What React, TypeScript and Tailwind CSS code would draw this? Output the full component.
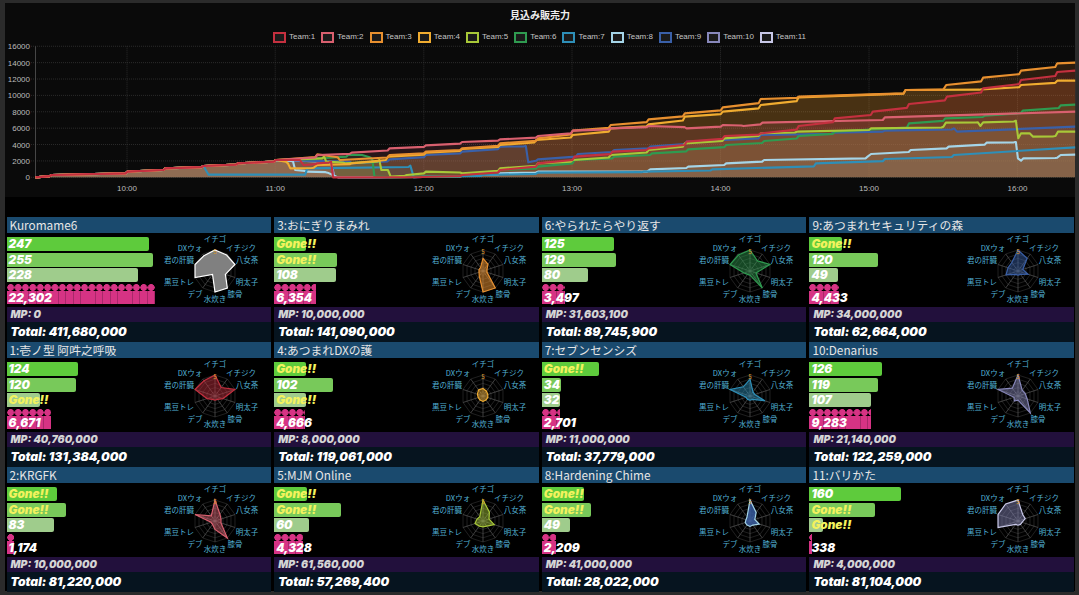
import React from "react";

type Pt = [number, number];

// chart traces: x,y are read off a 2.9x / 3x enlargement, mapped to px in toPath
const base: Pt[] = [[103, 532], [150, 525], [370, 515], [480, 505], [590, 498], [690, 490], [800, 480]];
const R = 1566;

const series: { color: string; pts: Pt[] }[] = [
  { color: "#c4303f", pts: [...base, [870, 480], [880, 495], [920, 490], [960, 485], [966, 532], [1225, 531], [1340, 525], [1450, 510], [1560, 490], [R + 100, 470], [R + 210, 455], [R + 315, 445], [R + 425, 425], [R + 535, 408], [R + 640, 400], [R + 750, 378], [R + 855, 355], [R + 965, 335], [R + 1070, 312], [R + 1180, 290], [R + 1285, 265], [R + 1395, 240], [R + 1500, 216], [R + 1552, 212]] },
  { color: "#d9606f", pts: [...base, [920, 465], [1020, 458], [1130, 445], [1235, 436], [1340, 426], [1450, 418], [R - 6, 408], [R + 95, 392], [R + 205, 385], [R + 315, 378], [R + 425, 385], [R + 530, 375], [R + 590, 378], [R + 645, 368], [R + 1000, 352], [R + 1552, 335]] },
  { color: "#e8902f", pts: [...base, [920, 463], [985, 480], [1130, 465], [1235, 455], [1340, 445], [1450, 430], [1560, 415], [R + 95, 392], [R + 205, 375], [R + 315, 358], [R + 420, 340], [R + 530, 322], [R + 640, 297], [R + 750, 290], [R + 1060, 270], [R + 1170, 268], [R + 1178, 255], [R + 1285, 233], [R + 1395, 212], [R + 1500, 190], [R + 1552, 188]] },
  { color: "#f0ac30", pts: [...base, [835, 490], [842, 505], [910, 503], [920, 495], [1020, 490], [1125, 470], [1235, 458], [1340, 447], [1450, 435], [1555, 420], [R + 95, 405], [R + 205, 385], [R + 315, 373], [R + 420, 350], [R + 530, 335], [R + 640, 315], [R + 750, 292], [R + 1060, 270], [R + 1280, 268], [R + 1395, 255], [R + 1500, 242], [R + 1552, 242]] },
  { color: "#a8c838", pts: [...base, [940, 470], [946, 485], [1000, 490], [1100, 480], [1106, 510], [1125, 510], [1133, 530], [1180, 525], [1235, 515], [1340, 520], [1450, 505], [1560, 490], [R + 95, 480], [R + 205, 465], [R + 315, 450], [R + 420, 430], [R + 535, 415], [R + 640, 400], [R + 745, 395], [R + 960, 385], [R + 1170, 380], [R + 1177, 368], [R + 1270, 367], [R + 1277, 378], [R + 1285, 367], [R + 1380, 362], [R + 1387, 415], [R + 1395, 400], [R + 1420, 400], [R + 1430, 410], [R + 1495, 408], [R + 1502, 395], [R + 1552, 395]] },
  { color: "#2f9a50", pts: [...base, [920, 475], [1010, 465], [1050, 465], [1080, 480], [1086, 530], [1130, 532], [1340, 525], [1450, 510], [1560, 500], [R + 100, 480], [R + 215, 470], [R + 325, 460], [R + 430, 448], [R + 540, 435], [R + 650, 423], [R + 750, 408], [R + 855, 395], [R + 1070, 370], [R + 1175, 355], [R + 1290, 347], [R + 1400, 332], [R + 1510, 316], [R + 1552, 314]] },
  { color: "#2e8fb8", pts: [...base.slice(0, 5), [605, 524], [885, 524], [891, 505], [1190, 497], [1200, 532], [1225, 530], [1400, 525], [1560, 518], [R + 300, 515], [R + 500, 508], [R + 800, 490], [R + 1000, 477], [R + 1200, 465], [R + 1552, 442]] },
  { color: "#a5d5e8", pts: [...base, [850, 485], [856, 510], [890, 515], [950, 518], [965, 525], [980, 532], [1100, 532], [1340, 527], [1450, 520], [1560, 515], [R + 310, 515], [R + 320, 508], [R + 430, 500], [R + 540, 490], [R + 650, 480], [R + 950, 470], [R + 960, 462], [R + 1075, 450], [R + 1185, 440], [R + 1295, 428], [R + 1380, 426], [R + 1386, 475], [R + 1395, 482], [R + 1402, 475], [R + 1500, 473], [R + 1510, 465], [R + 1552, 464]] },
  { color: "#3a60a8", pts: [...base, [1020, 490], [1130, 478], [1235, 465], [1340, 455], [1450, 440], [1525, 438], [1532, 487], [R - 6, 478], [R + 110, 462], [R + 215, 450], [R + 320, 440], [R + 425, 425], [R + 640, 405], [R + 850, 398], [R + 1000, 392], [R + 1200, 385], [R + 1210, 395], [R + 1552, 380]] },
  { color: "#8888bb", pts: [...base, [960, 490], [970, 532]] },
  { color: "#c8c8e8", pts: [...base, [960, 490], [970, 532]] },
];

const px = (p: Pt): Pt => [p[0] / 2.9, p[1] / 3];
// the plot svg starts at page y 44
const PLOT_TOP = 44;

function toPath(pts: Pt[]) {
  const out: string[] = [];
  pts.forEach((p, i) => {
    const [x, y] = px(p);
    if (i > 0 && i < pts.length - 1) {
      const [prevX, prevY] = px(pts[i - 1]);
      // climb part of the way slowly, then jump just before the point
      if (x - prevX > 6) out.push(`L${x - 2} ${prevY + (y - prevY) * 0.5 - PLOT_TOP}`);
    }
    out.push(`${i === 0 ? "M" : "L"}${x} ${y - PLOT_TOP}`);
  });
  return out.join(" ");
}

const legend = Array.from({ length: 11 }, (_, i) => ({ name: `Team:${i + 1}`, color: series[i].color }));

const yTicks = [16000, 14000, 12000, 10000, 8000, 6000, 4000, 2000, 0];
const xTicks = [
  ["10:00", 127],
  ["11:00", 275.2],
  ["12:00", 423.8],
  ["13:00", 572],
  ["14:00", 720.5],
  ["15:00", 869],
  ["16:00", 1017.5],
] as const;

function SalesChart() {
  const y0 = 177.3 - PLOT_TOP;
  const yStep = 16.38 / 2000;
  const drawn = [...series].reverse();
  return (
    <div className="h-[194px] bg-[#0a0a0a] font-['Liberation_Sans',sans-serif]">
      <div className="pt-[6px] text-center text-[10px] leading-[12px] font-bold text-[#eeeeee] font-['Noto_Sans_CJK_JP',sans-serif]">
        見込み販売力
      </div>
      <div className="mt-[9px] flex h-[14px] items-center justify-center gap-[6px] pr-[1px]">
        {legend.map((l) => (
          <div key={l.name} className="flex items-center gap-[3px]">
            <span
              className="h-[11px] w-[13px] border-2 bg-[#1a1a1a]"
              style={{ borderColor: l.color }}
            />
            <span className="text-[8px] leading-[10px] text-[#c4c4c4]">{l.name}</span>
          </div>
        ))}
      </div>
      {/* x in this svg is page x, the frame's 5px are taken off by the viewBox */}
      <svg width="1070" height="153" className="block overflow-visible" viewBox="5 0 1070 153">
        {yTicks.map((t) => {
          const y = y0 - t * yStep;
          return (
            <g key={t}>
              <line x1="31" x2="1075" y1={y} y2={y} stroke="#3a3a3a" strokeWidth="0.7" strokeDasharray="1 1" />
              <text x="30" y={y + 3} textAnchor="end" fontSize="8" fill="#bcbcbc">
                {t}
              </text>
            </g>
          );
        })}
        {xTicks.map(([label, x]) => (
          <g key={label}>
            <line x1={x} x2={x} y1={y0 - 131} y2={y0} stroke="#3a3a3a" strokeWidth="0.7" strokeDasharray="1 1" />
            <text x={x} y={y0 + 13.5} textAnchor="middle" fontSize="8" fill="#bcbcbc">
              {label}
            </text>
          </g>
        ))}
        <line x1="35.5" x2="35.5" y1={y0 - 131} y2={y0} stroke="#555555" strokeWidth="0.8" />
        {drawn.map((s) => (
          <path key={s.color} d={`${toPath(s.pts)} L1075 ${y0} L35.5 ${y0} Z`} fill={s.color} fillOpacity="0.15" />
        ))}
        {drawn.map((s) => (
          <path key={s.color} d={toPath(s.pts)} fill="none" stroke={s.color} strokeWidth="2.1" strokeLinejoin="round" />
        ))}
      </svg>
    </div>
  );
}

const axes = ["イチゴ", "イチジク", "八女茶", "明太子", "膝骨", "水炊き", "デブ", "黒豆トレ", "君の肝臓", "DXウォ"];
const labelPos: [number, number][] = [
  [0, -32],
  [26, -23],
  [32, -11],
  [32, 11],
  [20, 23],
  [0, 28],
  [-20, 23],
  [-36, 11],
  [-36, -11],
  [-25, -23],
];

function Radar({ values, stroke, fill }: { values: number[]; stroke: string; fill: string }) {
  const cx = 68;
  const cy = 38;
  const r = 21;
  const at = (i: number, v: number): Pt => {
    const a = (i * Math.PI) / 5;
    return [cx + (Math.sin(a) * r * v) / 5, cy - (Math.cos(a) * r * v) / 5];
  };
  return (
    <svg width="124" height="74" className="block font-['Noto_Sans_CJK_JP',sans-serif]">
      {[1, 2, 3, 4, 5].map((ring) => (
        <polygon
          key={ring}
          points={axes.map((_, i) => at(i, ring).join(",")).join(" ")}
          fill="none"
          stroke="#2e2e2e"
          strokeWidth="0.7"
        />
      ))}
      {axes.map((_, i) => {
        const [x, y] = at(i, 5);
        return <line key={i} x1={cx} y1={cy} x2={x} y2={y} stroke="#5a5a5a" strokeWidth="0.7" />;
      })}
      <polygon
        points={values.map((v, i) => at(i, v).join(",")).join(" ")}
        fill={fill}
        stroke={stroke}
        strokeWidth="1.2"
      />
      <text x={cx} y={cy - 17} textAnchor="middle" fontSize="6.5" fill="#d99a2b">
        5
      </text>
      {axes.map((label, i) => (
        <text
          key={label}
          x={cx + labelPos[i][0]}
          y={cy + labelPos[i][1] + 2.5}
          textAnchor="middle"
          fontSize="7.5"
          fill="#52b0d6"
        >
          {label}
        </text>
      ))}
    </svg>
  );
}

type Bar = { text: string; w: number };
type Team = {
  name: string;
  bars: [Bar, Bar, Bar];
  sales: number;
  mp: string;
  total: string;
  radar: number[];
  stroke: string;
  fill: string;
};

const gone = (w: number): Bar => ({ text: "Gone!!", w });
const num = (n: number): Bar => ({ text: String(n), w: n * 0.575 });

const teams: Team[] = [
  { name: "Kuromame6", bars: [num(247), num(255), num(228)], sales: 22302, mp: "0", total: "411,680,000", radar: [5, 4.7, 5, 2.6, 5, 5, 1, 5, 5, 4.5], stroke: "#ffffff", fill: "#808080" },
  { name: "3:おにぎりまみれ", bars: [gone(32), gone(63), num(108)], sales: 6354, mp: "10,000,000", total: "141,090,000", radar: [3, 2, 1, 1, 5, 5, 1.5, 1, 1, 1], stroke: "#e8902f", fill: "#e8902f88" },
  { name: "6:やられたらやり返す", bars: [num(125), num(129), num(80)], sales: 3497, mp: "31,603,100", total: "89,745,900", radar: [5, 3, 5, 1.5, 5, 1, 1, 1.5, 5, 4.7], stroke: "#2f9a50", fill: "#2f9a5077" },
  { name: "9:あつまれセキュリティの森", bars: [gone(33), num(120), num(49)], sales: 4433, mp: "34,000,000", total: "62,664,000", radar: [5, 3.7, 1.2, 2.5, 1, 1, 1, 3, 2.5, 2.5], stroke: "#3a60a8", fill: "#3a60a877" },
  { name: "1:壱ノ型 阿吽之呼吸", bars: [num(124), num(120), gone(33)], sales: 6671, mp: "40,760,000", total: "131,384,000", radar: [5, 2.5, 5, 2, 1, 1, 1, 2, 5, 4.5], stroke: "#c4303f", fill: "#c4303f77" },
  { name: "4:あつまれDXの護", bars: [gone(32), num(102), gone(32)], sales: 4666, mp: "8,000,000", total: "119,061,000", radar: [1.8, 1.4, 1.2, 1.2, 1.2, 1.3, 1.2, 1.2, 1.4, 1.8], stroke: "#f0ac30", fill: "#f0ac3077" },
  { name: "7:セブンセンシズ", bars: [gone(57), num(34), num(32)], sales: 2701, mp: "11,000,000", total: "37,779,000", radar: [4, 1.2, 1.2, 3.7, 1, 1, 1, 1, 5, 2.7], stroke: "#2e8fb8", fill: "#2e8fb877" },
  { name: "10:Denarius", bars: [num(126), num(119), num(107)], sales: 9283, mp: "21,140,000", total: "122,259,000", radar: [5, 1.7, 1.8, 2.3, 5, 1, 1.5, 1, 5, 2.3], stroke: "#8888bb", fill: "#8888bb77" },
  { name: "2:KRGFK", bars: [gone(50), gone(59), num(83)], sales: 1174, mp: "10,000,000", total: "81,220,000", radar: [5, 2, 1.5, 1.5, 5, 2, 1, 1, 5, 1.5], stroke: "#d9606f", fill: "#d9606f77" },
  { name: "5:MJM Online", bars: [gone(33), gone(67), num(60)], sales: 4328, mp: "61,560,000", total: "57,269,400", radar: [5, 2.6, 1.5, 2.8, 1.5, 1.4, 1.5, 2, 1.5, 1.3], stroke: "#a8c838", fill: "#a8c83877" },
  { name: "8:Hardening Chime", bars: [gone(42), gone(49), num(49)], sales: 2209, mp: "41,000,000", total: "28,022,000", radar: [5, 2.5, 1.2, 2.3, 1.2, 1.3, 1.2, 1.2, 1, 1.2], stroke: "#a5d5e8", fill: "#3a60a8cc" },
  { name: "11:バリかた", bars: [num(160), gone(66), gone(14)], sales: 338, mp: "4,000,000", total: "81,104,000", radar: [5, 1.9, 1.8, 1, 1, 1, 1, 5, 5, 5], stroke: "#c8c8e8", fill: "#8888bb77" },
];

const barColors = ["bg-[#5ecb3c]", "bg-[#78c95a]", "bg-[#9fcc8c]"];
const heavy = "font-['Inter',sans-serif] font-black italic";

function TeamCard({ team }: { team: Team }) {
  return (
    <div className="h-[125px]">
      <div className="h-[16px] whitespace-nowrap bg-[#1a4a6e] pl-[3px] text-[11.8px] leading-[16px] text-[#e6e6e6] font-['Noto_Sans_CJK_JP',sans-serif]">
        {team.name}
      </div>
      <div className="flex h-[74px] justify-between">
        <div className={`flex w-[140px] flex-col pt-[4px] text-[11.8px] leading-[14px] ${heavy}`}>
          {team.bars.map((b, i) => (
            <div
              key={i}
              className={`mb-[1.7px] h-[14px] shrink-0 whitespace-nowrap rounded-r-[2px] pl-[2px] ${barColors[i]} ${
                b.text === "Gone!!" ? "text-[#f2f25e]" : "text-white"
              }`}
              style={{ width: b.w }}
            >
              {b.text}
            </div>
          ))}
          <div className="relative h-[20px] shrink-0">
            <div
              className="h-[7px] bg-[radial-gradient(circle,#d63384_3.2px,transparent_3.6px)] bg-[length:7.4px_7px]"
              style={{ width: team.sales * 0.00665 }}
            />
            <div
              className="h-[13px] bg-[repeating-linear-gradient(90deg,#d63384_0,#d63384_6.6px,#a9286a_6.6px,#a9286a_7.4px)]"
              style={{ width: team.sales * 0.00665 }}
            />
            <span className="absolute bottom-[-1px] left-[2px] text-white">
              {team.sales.toLocaleString("en-US")}
            </span>
          </div>
        </div>
        <Radar values={team.radar} stroke={team.stroke} fill={team.fill} />
      </div>
      <div className={`h-[15px] bg-[#22103c] pl-[4px] text-[10.5px] leading-[15px] text-[#d4d4d4] ${heavy}`}>
        MP: {team.mp}
      </div>
      <div className={`h-[20px] bg-[#06141f] pl-[4px] text-[12.2px] leading-[20px] text-white ${heavy}`}>
        Total: {team.total}
      </div>
    </div>
  );
}

export default function App() {
  return (
    <div className="h-[595px] w-[1079px] overflow-hidden bg-[#2b2b2b] pt-[3px] pr-[4px] pb-[4px] pl-[5px]">
      <div className="h-[588px] bg-black">
        <SalesChart />
        <div className="grid grid-cols-4 gap-x-[3px] pt-[20px] pr-[1px] pl-[1.5px]">
          {teams.map((t) => (
            <TeamCard key={t.name} team={t} />
          ))}
        </div>
      </div>
    </div>
  );
}
